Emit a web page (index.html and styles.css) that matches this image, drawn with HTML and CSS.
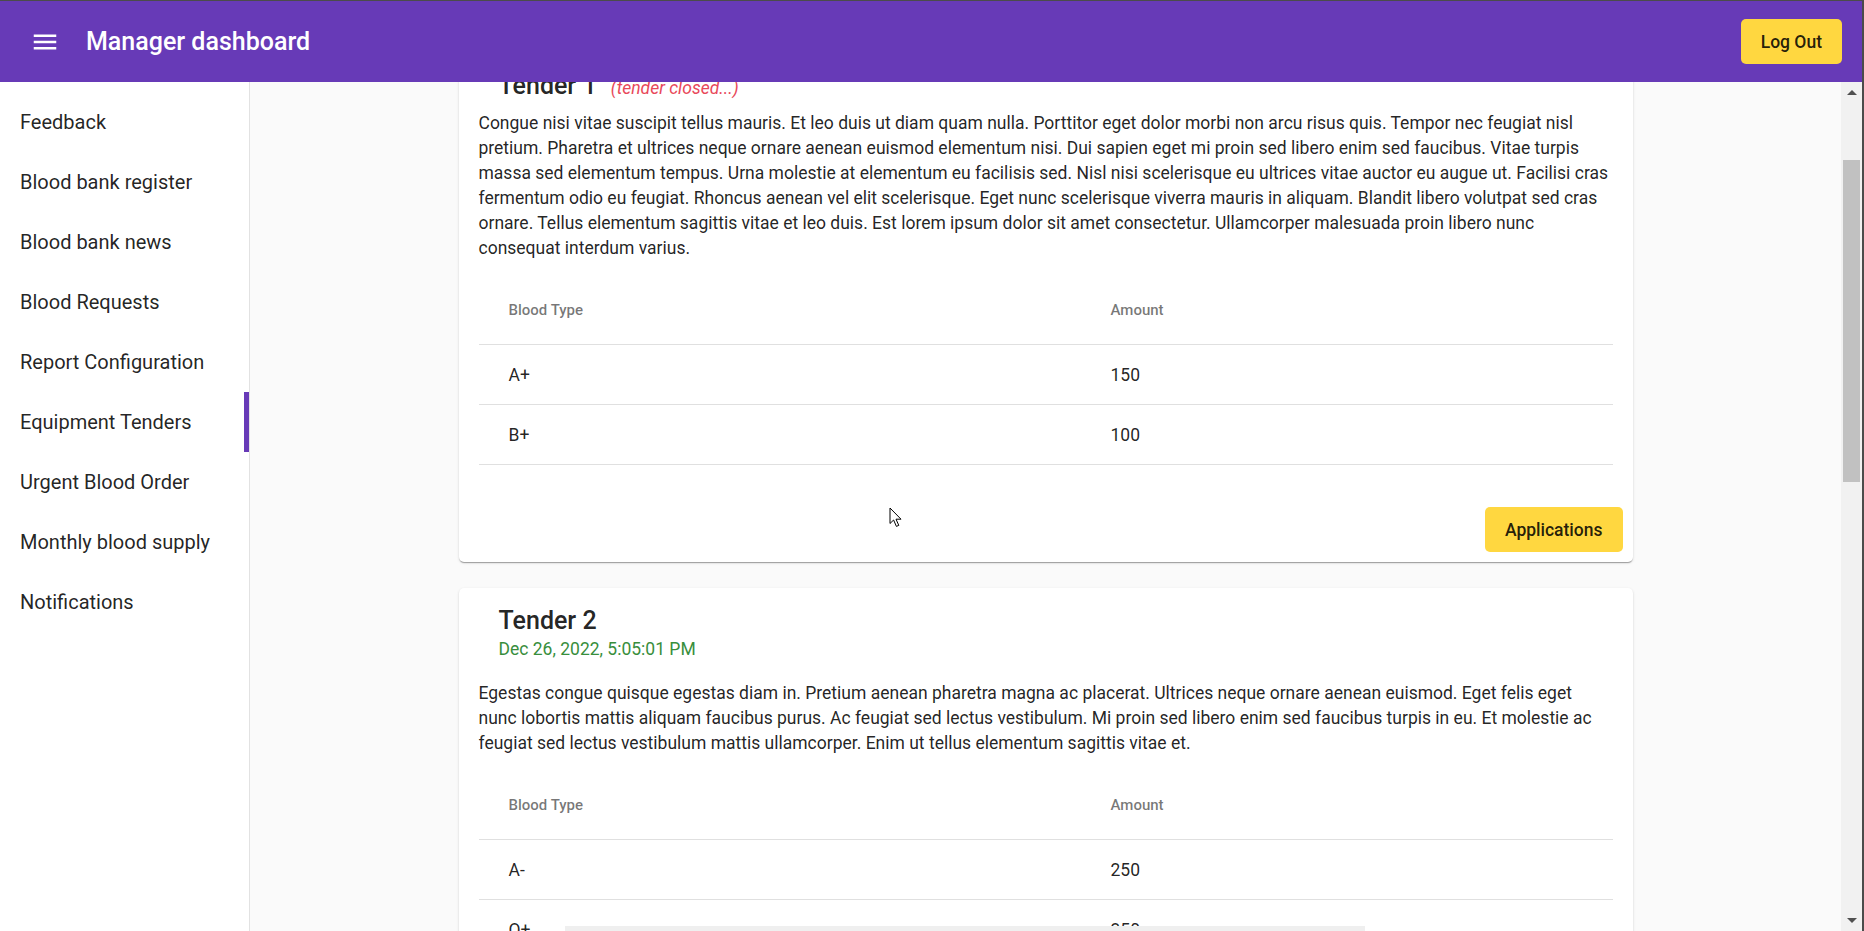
FILE: index.html
```html
<!DOCTYPE html>
<html lang="en">
<head>
<meta charset="utf-8">
<title>Manager dashboard</title>
<link rel="stylesheet" href="styles.css">
</head>
<body>
<div class="app">
  <header class="toolbar">
    <button class="icon-btn" aria-label="Menu">
      <svg class="menu-icon" viewBox="0 0 24 24" width="30" height="30"><path d="M3 18h18v-2H3v2zm0-5h18v-2H3v2zm0-7v2h18V6H3z" fill="currentColor"/></svg>
    </button>
    <span class="toolbar-title">Manager dashboard</span>
    <span class="spacer"></span>
    <button class="btn btn-accent">Log Out</button>
  </header>
  <div class="layout">
    <nav class="sidenav">
      <a class="nav-item">Feedback</a>
      <a class="nav-item">Blood bank register</a>
      <a class="nav-item">Blood bank news</a>
      <a class="nav-item">Blood Requests</a>
      <a class="nav-item">Report Configuration</a>
      <a class="nav-item active">Equipment Tenders</a>
      <a class="nav-item">Urgent Blood Order</a>
      <a class="nav-item">Monthly blood supply</a>
      <a class="nav-item">Notifications</a>
    </nav>
    <main class="content">
      <div class="tender-list">
        <section class="card">
          <div class="card-header compact">
            <h2 class="card-title">Tender 1 <span class="status-closed">(tender closed...)</span></h2>
          </div>
          <p class="card-text">Congue nisi vitae suscipit tellus mauris. Et leo duis ut diam quam nulla. Porttitor eget dolor morbi non arcu risus quis. Tempor nec feugiat nisl pretium. Pharetra et ultrices neque ornare aenean euismod elementum nisi. Dui sapien eget mi proin sed libero enim sed faucibus. Vitae turpis massa sed elementum tempus. Urna molestie at elementum eu facilisis sed. Nisl nisi scelerisque eu ultrices vitae auctor eu augue ut. Facilisi cras fermentum odio eu feugiat. Rhoncus aenean vel elit scelerisque. Eget nunc scelerisque viverra mauris in aliquam. Blandit libero volutpat sed cras ornare. Tellus elementum sagittis vitae et leo duis. Est lorem ipsum dolor sit amet consectetur. Ullamcorper malesuada proin libero nunc consequat interdum varius.</p>
          <table class="blood-table">
            <thead><tr><th class="col-type">Blood Type</th><th class="col-amount">Amount</th></tr></thead>
            <tbody>
              <tr><td class="col-type">A+</td><td class="col-amount">150</td></tr>
              <tr><td class="col-type">B+</td><td class="col-amount">100</td></tr>
            </tbody>
          </table>
          <div class="card-actions"><button class="btn btn-accent">Applications</button></div>
        </section>
        <section class="card">
          <div class="card-header">
            <h2 class="card-title">Tender 2</h2>
            <div class="card-date">Dec 26, 2022, 5:05:01 PM</div>
          </div>
          <p class="card-text">Egestas congue quisque egestas diam in. Pretium aenean pharetra magna ac placerat. Ultrices neque ornare aenean euismod. Eget felis eget nunc lobortis mattis aliquam faucibus purus. Ac feugiat sed lectus vestibulum. Mi proin sed libero enim sed faucibus turpis in eu. Et molestie ac feugiat sed lectus vestibulum mattis ullamcorper. Enim ut tellus elementum sagittis vitae et.</p>
          <table class="blood-table">
            <thead><tr><th class="col-type">Blood Type</th><th class="col-amount">Amount</th></tr></thead>
            <tbody>
              <tr><td class="col-type">A-</td><td class="col-amount">250</td></tr>
              <tr><td class="col-type">O+</td><td class="col-amount">350</td></tr>
            </tbody>
          </table>
          <div class="card-actions"><button class="btn btn-accent">Applications</button></div>
        </section>
      </div>
    </main>
    <div class="scrollbar" aria-hidden="true">
      <div class="sb-btn"><span class="sb-arrow up"></span></div>
      <div class="sb-track"><div class="sb-thumb"></div></div>
      <div class="sb-btn"><span class="sb-arrow down"></span></div>
    </div>
  </div>
  <div class="bottom-strip"></div>
  <svg class="cursor" width="14" height="21" viewBox="0 0 14 21"><path d="M1 1 L1 16.5 L4.6 13 L7.4 19.4 L9.8 18.4 L7 12.2 L12 12.2 Z" fill="#fff" stroke="#000" stroke-width="1"/></svg>
</div>
<script src="script.js"></script>
</body>
</html>
```
FILE: styles.css
```css
html, body {
  margin: 0;
  height: 100%;
}
body {
  font-family: Roboto, "Noto Sans", "Liberation Sans", sans-serif;
  color: rgba(0, 0, 0, 0.87);
  background: #fafafa;
}
.app {
  height: 100vh;
  box-sizing: border-box;
  border-top: 1px solid #4b4b4b;
  border-right: 2px solid #4b4b4b;
  display: flex;
  flex-direction: column;
  overflow: hidden;
}

/* toolbar */
.toolbar {
  flex: none;
  height: 81px;
  background: #673ab7;
  color: #fff;
  display: flex;
  align-items: center;
  padding: 0 20px;
}
.icon-btn {
  width: 50px;
  height: 50px;
  padding: 0;
  border: 0;
  background: none;
  color: #fff;
  display: flex;
  align-items: center;
  justify-content: center;
  margin-right: 16px;
}
.toolbar-title {
  font-size: 25px;
  font-weight: 500;
}
.spacer { flex: 1; }
.btn {
  height: 45px;
  padding: 0 20px;
  border: 0;
  border-radius: 5px;
  font-family: Roboto, "Noto Sans", sans-serif;
  font-size: 17.5px;
  font-weight: 500;
  color: rgba(0, 0, 0, 0.87);
}
.btn-accent { background: #ffd740; }

/* layout */
.layout {
  flex: 1;
  min-height: 0;
  display: flex;
}
.sidenav {
  flex: none;
  width: 250px;
  box-sizing: border-box;
  border-right: 1px solid #e2e2e2;
  background: #fff;
  padding-top: 10px;
}
.nav-item {
  position: relative;
  display: flex;
  align-items: center;
  height: 60px;
  padding: 0 20px;
  font-size: 20px;
  color: rgba(0, 0, 0, 0.87);
}
.nav-item.active::after {
  content: "";
  position: absolute;
  top: 0;
  right: 0;
  bottom: 0;
  width: 5px;
  background: #673ab7;
}

/* scrolling content */
.content {
  flex: 1;
  min-width: 0;
  overflow-y: scroll;
  scrollbar-width: none;
  background: #fafafa;
}
.content::-webkit-scrollbar { display: none; }

/* scrollbar as captured */
.scrollbar {
  flex: none;
  width: 21px;
  background: #f1f1f1;
  display: flex;
  flex-direction: column;
}
.sb-btn {
  flex: none;
  height: 21px;
  display: flex;
  align-items: center;
  justify-content: center;
}
.sb-arrow {
  width: 0;
  height: 0;
  border-left: 5px solid transparent;
  border-right: 5px solid transparent;
}
.sb-arrow.up { border-bottom: 5px solid #505050; }
.sb-arrow.down { border-top: 5px solid #505050; }
.sb-track {
  flex: 1;
  padding: 0 2px;
}
.sb-thumb {
  margin-top: 57px;
  height: 322px;
  background: #c1c1c1;
}

.tender-list {
  padding: 133px 0 25px;
}
.card {
  width: 1174px;
  box-sizing: border-box;
  margin: 0 auto 26px;
  padding: 20px;
  background: #fff;
  border-radius: 5px;
  box-shadow: 0 2px 1px -1px rgba(0, 0, 0, 0.2), 0 1px 1px 0 rgba(0, 0, 0, 0.14), 0 1px 3px 0 rgba(0, 0, 0, 0.12);
}
.card-header {
  padding-left: 20px;
  margin-bottom: 20px;
}
.card-header.compact {
  margin-bottom: 10px;
}
.card-title {
  margin: 0;
  font-size: 25px;
  font-weight: 500;
  line-height: 26px;
}
.status-closed {
  margin-left: 8px;
  font-size: 17.5px;
  font-weight: 400;
  font-style: italic;
  color: #e8485a;
}
.card-date {
  margin-top: 3px;
  font-size: 17.5px;
  line-height: 24px;
  color: #388e3c;
}
.card-text {
  margin: 0;
  font-size: 17.5px;
  line-height: 25px;
}

.blood-table {
  width: 100%;
  margin-top: 14px;
  border-collapse: collapse;
}
.blood-table th,
.blood-table td {
  padding: 0;
  text-align: left;
  border-bottom: 1px solid #e0e0e0;
}
.blood-table th {
  height: 69px;
  font-size: 15px;
  font-weight: 500;
  color: rgba(0, 0, 0, 0.54);
}
.blood-table td {
  height: 59px;
  font-size: 17.5px;
}
.blood-table .col-type {
  width: 602px;
  padding-left: 30px;
}
.blood-table .col-amount {
  padding-right: 30px;
}

.card-actions {
  display: flex;
  justify-content: flex-end;
  margin: 42px -10px -10px 0;
}

/* overlays from the captured screen */
.bottom-strip {
  position: fixed;
  left: 565px;
  bottom: 0;
  width: 800px;
  height: 5px;
  background: #efefef;
}
.cursor {
  position: fixed;
  left: 889px;
  top: 507px;
  pointer-events: none;
}
```
FILE: script.js
```js
document.querySelector('.content').scrollTop = 162;
```
